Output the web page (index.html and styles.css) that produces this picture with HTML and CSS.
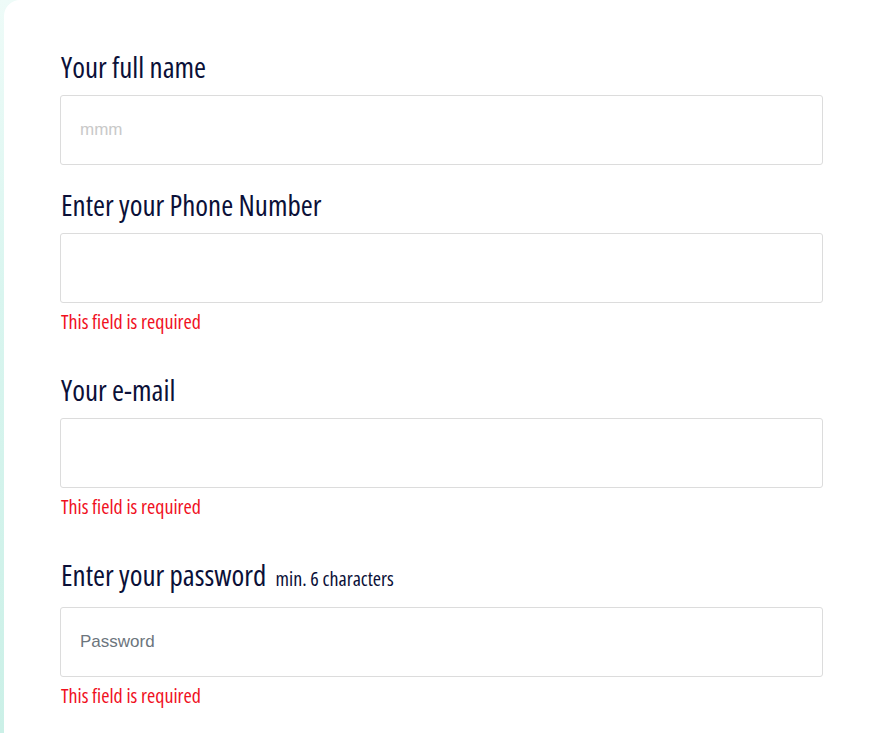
FILE: index.html
```html
<!DOCTYPE html>
<html lang="en">
<head>
<meta charset="utf-8">
<title>Sign up</title>
<link rel="stylesheet" href="styles.css">
</head>
<body>
<main class="card">
  <form class="form">
    <div class="field">
      <label class="label" for="name">Your full name</label>
      <input class="input input-light" id="name" type="text" placeholder="mmm">
    </div>
    <div class="field">
      <label class="label" for="phone">Enter your Phone Number</label>
      <input class="input" id="phone" type="tel">
      <p class="error">This field is required</p>
    </div>
    <div class="field">
      <label class="label" for="email">Your e-mail</label>
      <input class="input" id="email" type="email">
      <p class="error">This field is required</p>
    </div>
    <div class="field">
      <label class="label" for="password">Enter your password <span class="hint">min. 6 characters</span></label>
      <input class="input" id="password" type="password" placeholder="Password">
      <p class="error">This field is required</p>
    </div>
  </form>
</main>
</body>
</html>
```
FILE: styles.css
```css
html, body {
  margin: 0;
  padding: 0;
  height: 100%;
}
body {
  background: linear-gradient(to bottom, #eefbf8 0%, #d9f5ef 40%, #cbf0e7 100%);
  overflow: hidden;
}
.card {
  margin-left: 4px;
  min-height: 100%;
  background: #ffffff;
  border-top-left-radius: 16px;
  padding: 48px 51px 0 56px;
  box-sizing: border-box;
}
.form {
  display: flex;
  flex-direction: column;
}
.field {
  display: flex;
  flex-direction: column;
  margin-bottom: 21px;
}
.label {
  font-family: "Open Sans", sans-serif;
  font-stretch: 75%;
  font-weight: 400;
  font-size: 29px;
  line-height: 34px;
  color: #0b1038;
  padding-top: 2px;
  margin: 0 0 11px 1px;
}
.hint {
  font-size: 20px;
  margin-left: 4px;
}
.input {
  display: block;
  height: 70px;
  box-sizing: border-box;
  border: 1px solid #dcdcdc;
  border-radius: 3px;
  padding: 0 20px 0 19px;
  font-family: "Liberation Sans", Arial, sans-serif;
  font-size: 17px;
  color: #333;
  background: #fff;
  outline: none;
  width: 100%;
}
.input::placeholder {
  color: #6c757d;
  opacity: 1;
}
.input-light::placeholder {
  color: #c9c9c9;
}
.error {
  font-family: "Open Sans", sans-serif;
  font-stretch: 75%;
  font-size: 20px;
  line-height: 24px;
  color: #f0101e;
  margin: 7px 0 16px 1px;
}
```
